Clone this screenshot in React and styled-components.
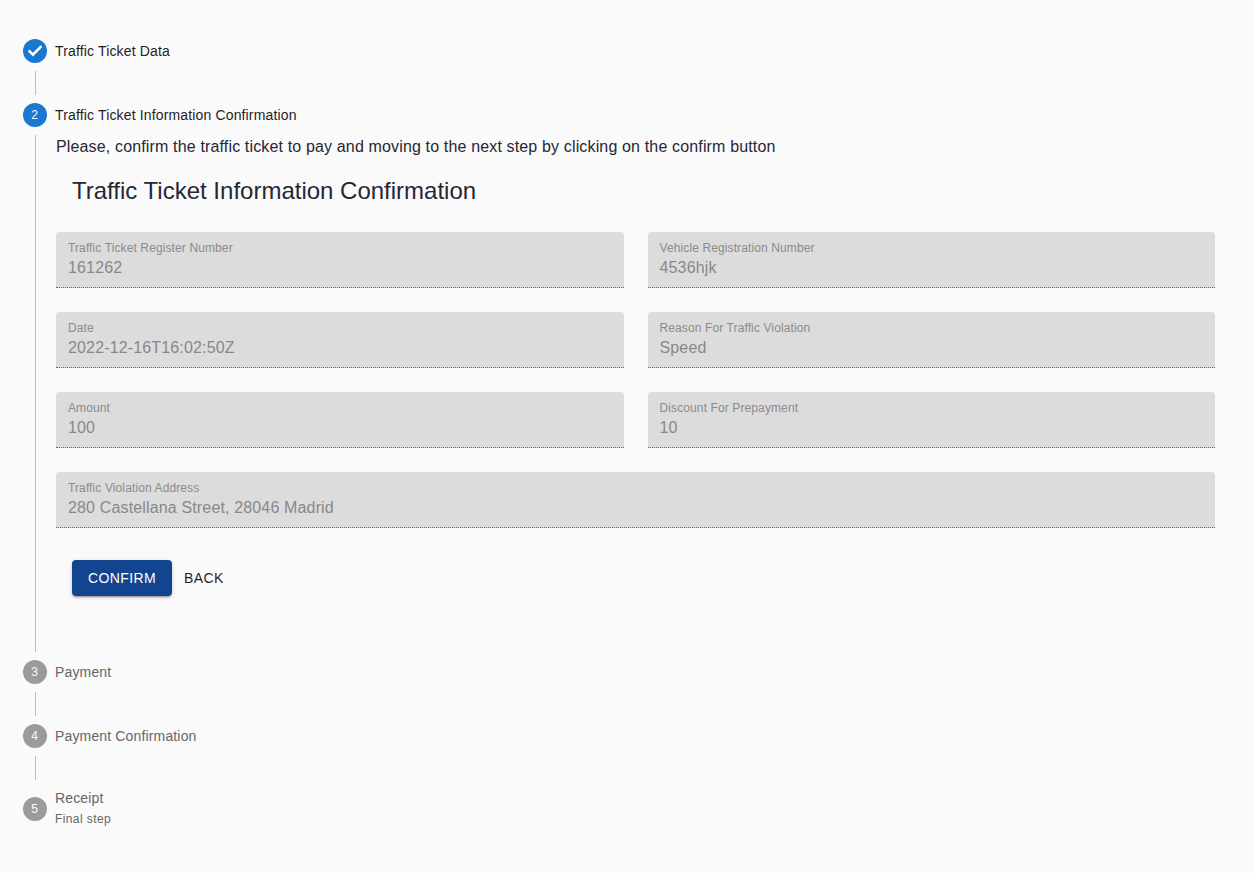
import React from "react";
import styled, { createGlobalStyle } from "styled-components";

const GlobalStyle = createGlobalStyle`
  *, *::before, *::after { box-sizing: border-box; }
  body {
    margin: 0;
    background: #fafafa;
    font-family: Helvetica, "Liberation Sans", Arial, sans-serif;
    -webkit-font-smoothing: antialiased;
  }
`;

const Stepper = styled.main`
  display: flex;
  flex-direction: column;
  width: 1200px;
  margin: 31px 0 0 23px;
`;

const StepHeader = styled.div`
  display: flex;
  align-items: center;
  padding: 8px 0;
`;

const StepIcon = styled.svg`
  display: block;
  flex: none;
  width: 24px;
  height: 24px;
  margin-right: 8px;
  color: ${(p) => (p.$active ? "#1a78d0" : "#9b9b9b")};
`;

const StepNumber = styled.text`
  fill: #fafafa;
  font-size: 12px;
  text-anchor: middle;
  dominant-baseline: central;
`;

const StepTitle = styled.div`
  font-size: 14px;
  line-height: 20px;
  letter-spacing: 0.15px;
  color: ${(p) => (p.$active ? "#1f1f1f" : "#666")};
`;

const StepCaption = styled.div`
  font-size: 12px;
  line-height: 22px;
  letter-spacing: 0.4px;
  color: #666;
`;

const Connector = styled.div`
  height: 24px;
  margin-left: 12px;
  border-left: 1px solid #bdbdbd;
`;

const StepContent = styled.section`
  height: 517px;
  margin-left: 12px;
  padding: 0 8px 0 20px;
  border-left: 1px solid #bdbdbd;
  color: #272635;
`;

const Instructions = styled.p`
  margin: 0;
  font-size: 16px;
  line-height: 24px;
  letter-spacing: 0.15px;
`;

const Heading = styled.h1`
  margin: 0;
  padding: 16px 16px 25px;
  font-size: 24px;
  font-weight: 400;
  line-height: 32px;
`;

const FieldGrid = styled.div`
  display: grid;
  grid-template-columns: 1fr 1fr;
  gap: 24px;
`;

const Field = styled.div`
  grid-column: ${(p) => (p.$wide ? "1 / -1" : "auto")};
  height: 56px;
  padding: 8px 12px 0;
  background: #dcdcdc;
  border-bottom: 1px dotted #6c6c6c;
  border-radius: 4px 4px 0 0;
`;

const FieldLabel = styled.div`
  font-size: 12px;
  line-height: 16px;
  letter-spacing: 0.1125px;
  color: #8b8b8b;
`;

const FieldValue = styled.div`
  font-size: 16px;
  line-height: 23px;
  letter-spacing: 0.15px;
  color: #888;
`;

const Actions = styled.div`
  display: flex;
  gap: 4px;
  padding: 32px 16px 0;
`;

const Button = styled.button`
  height: 36px;
  padding: 0 ${(p) => (p.$primary ? 0 : 8)}px;
  width: ${(p) => (p.$primary ? "100px" : "auto")};
  border: 0;
  border-radius: 4px;
  font: 400 14px/24px Helvetica, "Liberation Sans", Arial, sans-serif;
  letter-spacing: 0.4px;
  text-transform: uppercase;
  color: ${(p) => (p.$primary ? "#fff" : "#1f1f1f")};
  background: ${(p) => (p.$primary ? "#134490" : "transparent")};
  box-shadow: ${(p) =>
    p.$primary
      ? "0 3px 1px -2px rgba(0,0,0,.2), 0 2px 2px 0 rgba(0,0,0,.14), 0 1px 5px 0 rgba(0,0,0,.12)"
      : "none"};
`;

const fields = [
  ["Traffic Ticket Register Number", "161262"],
  ["Vehicle Registration Number", "4536hjk"],
  ["Date", "2022-12-16T16:02:50Z"],
  ["Reason For Traffic Violation", "Speed"],
  ["Amount", "100"],
  ["Discount For Prepayment", "10"],
  ["Traffic Violation Address", "280 Castellana Street, 28046 Madrid", true],
];

function Step({ number, title, caption, active, completed }) {
  return (
    <StepHeader>
      <StepIcon viewBox="0 0 24 24" $active={active}>
        <circle cx="12" cy="12" r="12" fill="currentColor" />
        {completed ? (
          <path
            fill="none"
            stroke="#fff"
            strokeWidth="2.5"
            d="M5.7 11.5l4.3 4.2 8.4-8.6"
          />
        ) : (
          <StepNumber x="11.7" y="11.8">{number}</StepNumber>
        )}
      </StepIcon>
      <div>
        <StepTitle $active={active}>{title}</StepTitle>
        {caption && <StepCaption>{caption}</StepCaption>}
      </div>
    </StepHeader>
  );
}

export default function App() {
  return (
    <>
      <GlobalStyle />
      <Stepper>
        <Step title="Traffic Ticket Data" active completed />
        <Connector />
        <Step number={2} title="Traffic Ticket Information Confirmation" active />
        <StepContent>
          <Instructions>
            Please, confirm the traffic ticket to pay and moving to the next step by clicking on the confirm button
          </Instructions>
          <Heading>Traffic Ticket Information Confirmation</Heading>
          <FieldGrid>
            {fields.map(([label, value, wide]) => (
              <Field key={label} $wide={wide}>
                <FieldLabel>{label}</FieldLabel>
                <FieldValue>{value}</FieldValue>
              </Field>
            ))}
          </FieldGrid>
          <Actions>
            <Button $primary>Confirm</Button>
            <Button>Back</Button>
          </Actions>
        </StepContent>
        <Step number={3} title="Payment" />
        <Connector />
        <Step number={4} title="Payment Confirmation" />
        <Connector />
        <Step number={5} title="Receipt" caption="Final step" />
      </Stepper>
    </>
  );
}
